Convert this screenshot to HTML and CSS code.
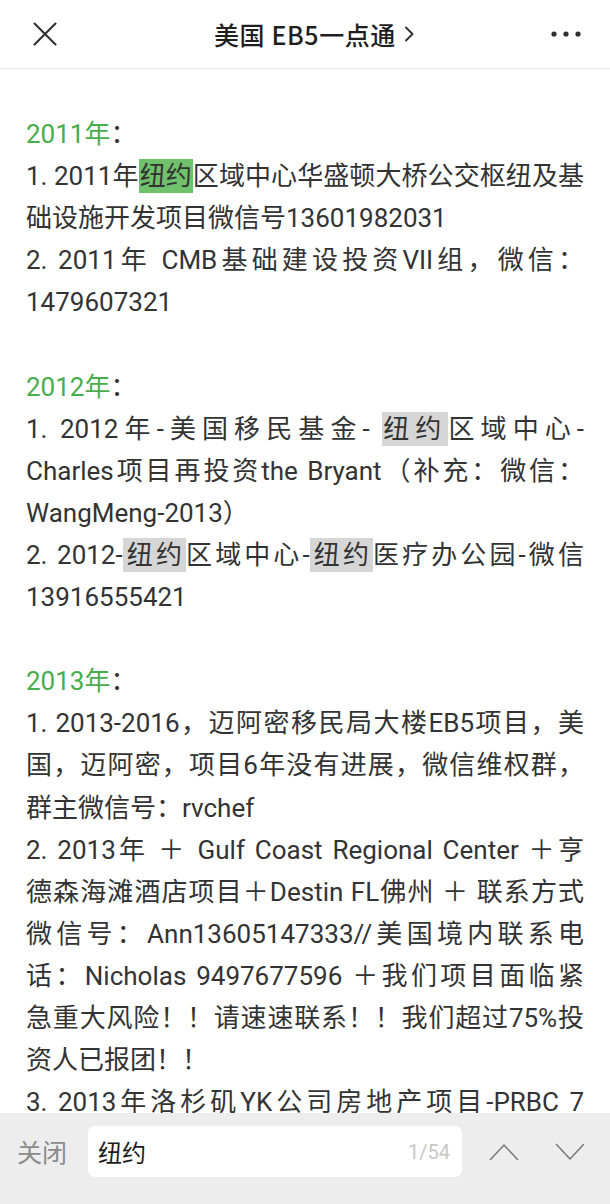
FILE: index.html
```html
<!DOCTYPE html>
<html lang="zh-CN">
<head>
<meta charset="utf-8">
<title>美国 EB5一点通</title>
<link rel="stylesheet" href="styles.css">
</head>
<body>
<header class="topbar">
  <div class="top-left">
    <svg class="icon-close" width="24" height="24" viewBox="0 0 24 24"><path d="M1.5 1.5 L22.5 22.5 M22.5 1.5 L1.5 22.5" stroke="#2f2f2f" stroke-width="2.1" fill="none" stroke-linecap="round"/></svg>
  </div>
  <div class="title"><span class="title-text">美国 EB5一点通</span><svg class="title-chev" width="12" height="18" viewBox="0 0 12 18"><path d="M3 2.5 L9.5 9 L3 15.5" stroke="#2f2f2f" stroke-width="1.8" fill="none" stroke-linecap="round" stroke-linejoin="round"/></svg></div>
  <div class="top-right">
    <svg width="30" height="8" viewBox="0 0 30 8"><circle cx="3" cy="4" r="2.6" fill="#2f2f2f"/><circle cx="15" cy="4" r="2.6" fill="#2f2f2f"/><circle cx="27" cy="4" r="2.6" fill="#2f2f2f"/></svg>
  </div>
</header>

<main class="article">
  <p class="para"><span class="ln"><span class="year">2011年</span>：</span></p>
  <p class="para"><span class="ln fill">1. 2011年<span class="hl hl-active">纽约</span>区域中心华盛顿大桥公交枢纽及基</span><span class="ln">础设施开发项目微信号13601982031</span></p>
  <p class="para"><span class="ln fill">2. 2011年 CMB基础建设投资VII组，微信：</span><span class="ln">1479607321</span></p>
  <p class="para blank"><span class="ln">&nbsp;</span></p>

  <p class="para"><span class="ln"><span class="year">2012年</span>：</span></p>
  <p class="para"><span class="ln fill">1. 2012年-美国移民基金- <span class="hl">纽约</span>区域中心-</span><span class="ln fill">Charles项目再投资the Bryant（补充：微信：</span><span class="ln">WangMeng-2013）</span></p>
  <p class="para"><span class="ln fill">2. 2012-<span class="hl">纽约</span>区域中心-<span class="hl">纽约</span>医疗办公园-微信</span><span class="ln">13916555421</span></p>
  <p class="para blank"><span class="ln">&nbsp;</span></p>

  <p class="para"><span class="ln"><span class="year">2013年</span>：</span></p>
  <p class="para"><span class="ln fill">1. 2013-2016，迈阿密移民局大楼EB5项目，美</span><span class="ln fill">国，迈阿密，项目6年没有进展，微信维权群，</span><span class="ln">群主微信号：rvchef</span></p>
  <p class="para"><span class="ln fill">2. 2013年 ＋ Gulf Coast Regional Center ＋亨</span><span class="ln fill">德森海滩酒店项目＋Destin FL佛州 ＋ 联系方式</span><span class="ln fill">微信号：Ann13605147333//美国境内联系电</span><span class="ln fill">话：Nicholas 9497677596 ＋我们项目面临紧</span><span class="ln fill">急重大风险！！请速速联系！！我们超过75%投</span><span class="ln">资人已报团！！</span></p>
  <p class="para"><span class="ln fill">3. 2013年洛杉矶YK公司房地产项目-PRBC 7</span></p>
</main>

<footer class="findbar">
  <span class="find-close">关闭</span>
  <div class="find-box">
    <span class="find-query">纽约</span>
    <span class="find-count">1/54</span>
  </div>
  <div class="find-nav">
    <svg width="30" height="18" viewBox="0 0 30 18"><path d="M1.5 16.5 L15 2 L28.5 16.5" stroke="#7b7b7b" stroke-width="1.6" fill="none" stroke-linecap="round" stroke-linejoin="round"/></svg>
    <svg width="30" height="18" viewBox="0 0 30 18"><path d="M1.5 1.5 L15 16 L28.5 1.5" stroke="#7b7b7b" stroke-width="1.6" fill="none" stroke-linecap="round" stroke-linejoin="round"/></svg>
  </div>
</footer>
</body>
</html>
```

FILE: styles.css
```css
html, body {
  margin: 0;
  padding: 0;
  background: #ffffff;
}

body {
  width: 610px;
  height: 1204px;
  overflow: hidden;
  font-family: Roboto, "Noto Sans CJK SC", sans-serif;
  color: #333333;
}

.topbar {
  height: 68px;
  border-bottom: 1px solid #e6e6e8;
  display: grid;
  grid-template-columns: 1fr auto 1fr;
  align-items: center;
  background: #ffffff;
}

.top-left {
  padding-left: 33px;
  display: flex;
  align-items: center;
}

.icon-close {
  display: block;
  margin-top: -1px;
}

.title {
  display: flex;
  align-items: center;
  font-family: "Noto Sans CJK SC", sans-serif;
  font-size: 25px;
  font-weight: 500;
  color: #1f1f1f;
  letter-spacing: 0.6px;
}

.title-chev {
  display: block;
  margin-left: 7px;
  margin-right: -19px;
}

.top-right {
  display: flex;
  justify-content: flex-end;
  padding-right: 29px;
}

.top-right svg {
  display: block;
}

.article {
  padding: 44px 26px 0 26px;
  font-size: 26px;
  line-height: 42.1px;
}

.para {
  margin: 0;
  text-align: justify;
}

.ln {
  display: block;
  white-space: nowrap;
}

.ln.fill {
  text-align-last: justify;
  white-space: normal;
}

.year {
  color: #48ad4c;
}

.hl {
  background: #d6d6d6;
  padding: 2px 1px;
}

.hl-active {
  background: #6fc16b;
}

.findbar {
  position: fixed;
  left: 0;
  right: 0;
  bottom: 0;
  height: 91px;
  box-sizing: border-box;
  padding: 13px 0 27px 0;
  background: #ededed;
  display: flex;
  align-items: center;
  font-family: "Noto Sans CJK SC", sans-serif;
}

.find-close {
  margin-left: 17px;
  font-size: 25px;
  color: #8b8b8b;
  line-height: 51px;
}

.find-box {
  margin-left: 21px;
  width: 374px;
  height: 51px;
  box-sizing: border-box;
  background: #ffffff;
  border-radius: 7px;
  display: flex;
  align-items: center;
  justify-content: space-between;
  padding: 0 12px 0 10px;
}

.find-query {
  font-size: 24px;
  color: #1c1c1c;
}

.find-count {
  font-family: Roboto, sans-serif;
  font-size: 20px;
  color: #c7c7c7;
}

.find-nav {
  display: flex;
  gap: 36px;
  margin-left: 27px;
}

.find-nav svg {
  display: block;
}
```
